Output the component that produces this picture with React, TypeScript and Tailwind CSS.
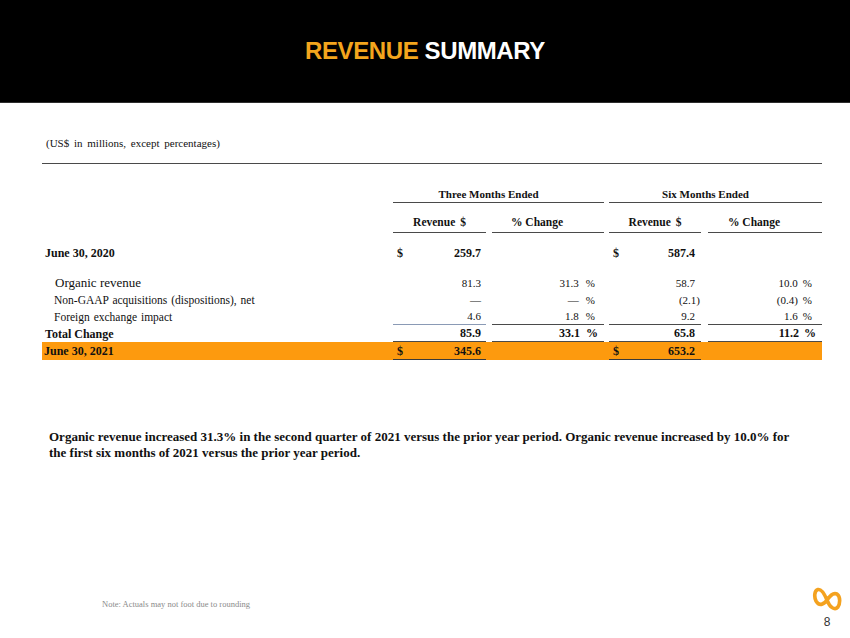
import React from "react";

const serif = { fontFamily: '"Liberation Serif", "Times New Roman", serif' };

function Rev({ num, bold, hang, pl = "pl-[4px]", pr = "pr-[5px]", border = "", showDollar }: { num: string; bold?: boolean; hang?: boolean; pl?: string; pr?: string; border?: string; showDollar?: boolean }) {
  return (
    <div className={`flex h-full items-center justify-between ${pl} ${pr} ${border} ${bold ? "font-bold" : ""}`}>
      <span>{showDollar ? "$" : ""}</span>
      <span className={hang ? "mr-[-5px]" : ""}>{num}</span>
    </div>
  );
}

function Pct({ num, bold, gap, pr, border = "" }: { num: string; bold?: boolean; gap: string; pr: string; border?: string }) {
  return (
    <div className={`flex h-full items-center justify-end ${pr} ${border} ${bold ? "font-bold" : ""}`}>
      <span>{num}</span>
      {num !== "" && <span className={gap}>%</span>}
    </div>
  );
}

type RowProps = {
  label: string;
  labelCls: string;
  vals: [string, string, string, string];
  bold?: boolean;
  dollar?: boolean;
  hang3?: boolean;
  rowCls?: string;
  b1?: string;
  b2?: string;
  b3?: string;
  b4?: string;
};

function Row({ label, labelCls, vals, bold, dollar, hang3, rowCls = "h-[17px]", b1 = "", b2 = "", b3 = "", b4 = "" }: RowProps) {
  return (
    <div className={`flex ${rowCls} ${bold ? "text-[12px]" : "text-[11px]"}`}>
      <div className={`w-[351px] shrink-0 flex items-center ${labelCls}`}>{label}</div>
      <div className="w-[93px] shrink-0 h-full">
        <Rev num={vals[0]} bold={bold} showDollar={dollar} border={b1} />
      </div>
      <div className="w-[112px] shrink-0 ml-[6px] h-full">
        <Pct num={vals[1]} bold={bold} gap={bold ? "ml-[6px]" : "ml-[7px]"} pr={bold ? "pr-[6px]" : "pr-[9px]"} border={b2} />
      </div>
      <div className="w-[92px] shrink-0 ml-[5px] h-full">
        <Rev num={vals[2]} bold={bold} showDollar={dollar} hang={hang3} pr="pr-[6px]" border={b3} />
      </div>
      <div className="w-[114px] shrink-0 ml-[7px] h-full">
        <Pct num={vals[3]} bold={bold} gap="ml-[5px]" pr={bold ? "pr-[6px]" : "pr-[10px]"} border={b4} />
      </div>
    </div>
  );
}

function Logo() {
  return (
    <svg width="30" height="26" viewBox="0 0 28 24" fill="none">
      <path
        d="M14 13 C 11.5 7, 8.5 2.5, 5.5 3.2 C 2.2 4, 1.8 10, 3.8 14 C 6.5 18.8, 11 17.5, 14 13 C 17 8.5, 20.5 5.8, 23.5 7.5 C 26.5 9.5, 26.5 16.5, 24 19.8 C 21 23, 16.5 19.5, 14 13 Z"
        stroke="#f4a21f"
        strokeWidth="3.4"
        strokeLinejoin="round"
        strokeLinecap="round"
      />
    </svg>
  );
}

export default function App() {
  const dark = "border-b border-[#4a4a4a]";
  return (
    <div className="w-[850px] h-[638px] bg-white overflow-hidden flex flex-col text-[#111]" style={serif}>
      <header className="h-[103px] bg-black flex items-center justify-center border-b border-[#2e2e2e] shrink-0">
        <h1
          className="text-[24px] font-bold tracking-[-0.4px] leading-none"
          style={{ fontFamily: '"Liberation Sans", Arial, sans-serif' }}
        >
          <span className="text-[#f4a51d]">REVENUE</span> <span className="text-white">SUMMARY</span>
        </h1>
      </header>

      <div className="pl-[42px] pr-[28px]">
        <div className="pt-[32px] pl-[4px] text-[11px] leading-[16px] [word-spacing:2px]">
          (US$ in millions, except percentages)
        </div>
        <div className="mt-[12px] border-t border-[#4a4a4a]" />

        <div className="flex mt-[22px] text-[11px] font-bold">
          <div className="w-[351px] shrink-0" />
          <div className={`w-[211px] shrink-0 h-[17px] flex items-center justify-center pr-[20px] ${dark}`}>
            Three Months Ended
          </div>
          <div className={`w-[213px] shrink-0 ml-[5px] h-[17px] flex items-center justify-center pr-[20px] ${dark}`}>
            Six Months Ended
          </div>
        </div>

        <div className="flex text-[11.5px] font-bold">
          <div className="w-[351px] shrink-0" />
          <div className={`w-[93px] shrink-0 h-[30px] pt-[11px] leading-[16px] text-center ${dark} [word-spacing:2px]`}>Revenue $</div>
          <div className={`w-[112px] shrink-0 ml-[6px] h-[30px] pt-[11px] leading-[16px] text-center pr-[22px] ${dark}`}>% Change</div>
          <div className={`w-[92px] shrink-0 ml-[5px] h-[30px] pt-[11px] leading-[16px] text-center ${dark} [word-spacing:2px]`}>Revenue $</div>
          <div className={`w-[114px] shrink-0 ml-[7px] h-[30px] pt-[11px] leading-[16px] text-center pr-[22px] ${dark}`}>% Change</div>
        </div>

        <div className="leading-[16px]">
          <div className="mt-[12px]">
            <Row label="June 30, 2020" labelCls="pl-[3px] font-bold" vals={["259.7", "", "587.4", ""]} bold dollar rowCls="h-[16px]" />
          </div>
          <div className="mt-[13px]">
            <Row label="Organic revenue" labelCls="pl-[13px] text-[13px]" vals={["81.3", "31.3", "58.7", "10.0"]} />
            <Row label="Non-GAAP acquisitions (dispositions), net" labelCls="pl-[12px] text-[11.5px] [word-spacing:1px]" vals={["—", "—", "(2.1)", "(0.4)"]} hang3 />
            <Row
              label="Foreign exchange impact"
              labelCls="pl-[12px] text-[11.5px] [word-spacing:1px]"
              vals={["4.6", "1.8", "9.2", "1.6"]}
              b1="border-b border-[#8a9ab5]"
              b2={dark}
              b3={dark}
              b4={dark}
            />
            <Row
              label="Total Change"
              labelCls="pl-[3px] font-bold"
              vals={["85.9", "33.1", "65.8", "11.2"]}
              bold
              b1={dark}
              b2={dark}
              b3={dark}
              b4={dark}
            />
            <div className="bg-[#fd9a0e]">
              <Row
                label="June 30, 2021"
                labelCls="pl-[2px] font-bold"
                vals={["345.6", "", "653.2", ""]}
                bold
                dollar
                rowCls="h-[18px]"
                b1="border-b border-[#3a3a3a]"
                b3="border-b border-[#3a3a3a]"
              />
            </div>
          </div>
        </div>

        <p className="mt-[69px] pl-[7px] text-[13px] leading-[16px] font-bold whitespace-nowrap">
          Organic revenue increased 31.3% in the second quarter of 2021 versus the prior year period. Organic revenue increased by 10.0% for
          <br />
          the first six months of 2021 versus the prior year period.
        </p>
      </div>

      <div className="flex justify-between mt-[125px] pl-[102px] pr-[8px]">
        <div className="mt-[13px] text-[8.5px] leading-[10px] text-[#8a8a8a]">Note: Actuals may not foot due to rounding</div>
        <div className="flex flex-col items-center w-[30px]">
          <Logo />
          <div className="mt-[4px] text-[12px] leading-[12px] text-[#333]" style={{ fontFamily: '"Liberation Sans", Arial, sans-serif' }}>
            8
          </div>
        </div>
      </div>
    </div>
  );
}
